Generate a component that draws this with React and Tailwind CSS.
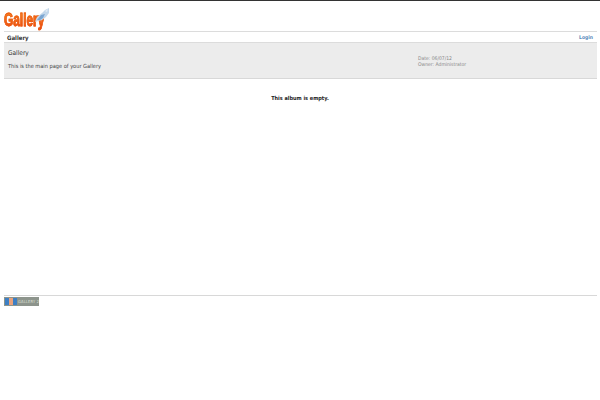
import React from 'react';

const font = { fontFamily: '"DejaVu Sans Condensed", "Liberation Sans", sans-serif' };

const Logo = () => (
  <div className="relative h-[23px] w-[47px]">
    <span className="absolute left-0 top-[1px] origin-top-left scale-x-[0.66] bg-gradient-to-b from-[#f58a1f] to-[#e8400f] bg-clip-text font-['Liberation_Sans'] text-[18px] font-bold leading-[20px] whitespace-nowrap text-transparent [-webkit-text-stroke:0.8px_#ee5a12]">
      Gallery
    </span>
    <svg className="absolute left-[30px] top-[-1px]" width="16" height="16" viewBox="0 0 16 16">
      <path d="M1 14 L3 9 L8 5 L11 2 L15 0 L15 5 L12 9 L8 12 L4 13 Z" fill="#c3d7ea" />
      <path d="M3 12 L7 7 L11 6 L9 10 L6 12 Z" fill="#7ba6d2" />
      <path d="M11 3 L14 1 L13 4 Z" fill="#e3edf6" />
    </svg>
  </div>
);

const Badge = () => (
  <div className="flex h-[9px] w-[35px] items-center bg-[#8d948c] p-px">
    <div className="flex h-[7px] w-[12px] shrink-0">
      <div className="w-1/3 bg-[#3d7fc4]" />
      <div className="w-1/3 bg-[#e9a27c]" />
      <div className="w-1/3 bg-[#3d7fc4]" />
    </div>
    <span className="ml-px text-[4px] leading-none tracking-[0.2px] whitespace-nowrap text-[#dfe2da]">GALLERY 2</span>
  </div>
);

export default function App() {
  return (
    <div className="h-[400px] w-[600px] overflow-hidden bg-white text-[#333]" style={font}>
      <div className="h-px bg-[#333]" />
      <div className="h-[30px] pl-[4px] pt-[8px]">
        <Logo />
      </div>
      <div className="ml-[4px] mr-[3px] flex h-[12px] items-center justify-between border-y border-[#dcdcdc] pt-px">
        <span className="pl-[3px] text-[6px] font-bold text-[#333]">Gallery</span>
        <span className="pr-[4px] text-[5px] font-bold text-[#5b8cbc]">Login</span>
      </div>
      <div className="ml-[4px] mr-[3px] flex h-[36px] border-b border-[#d8d8d8] bg-[#ececec]">
        <div className="w-[414px] pl-[4px] pt-[6px]">
          <div className="text-[6.5px] leading-[9px] text-[#333]">Gallery</div>
          <div className="mt-[4px] text-[5.6px] leading-[8px] text-[#444]">This is the main page of your Gallery</div>
        </div>
        <div className="pt-[12px] text-[5px] leading-[6px] text-[#888]">
          <div>Date: 06/07/12</div>
          <div>Owner: Administrator</div>
        </div>
      </div>
      <div className="h-[216px] pt-[14px] text-center text-[5.5px] font-bold leading-[10px] text-[#222]">
        This album is empty.
      </div>
      <div className="ml-[4px] mr-[3px] border-t border-[#d8d8d8] pt-[1px]">
        <Badge />
      </div>
    </div>
  );
}
